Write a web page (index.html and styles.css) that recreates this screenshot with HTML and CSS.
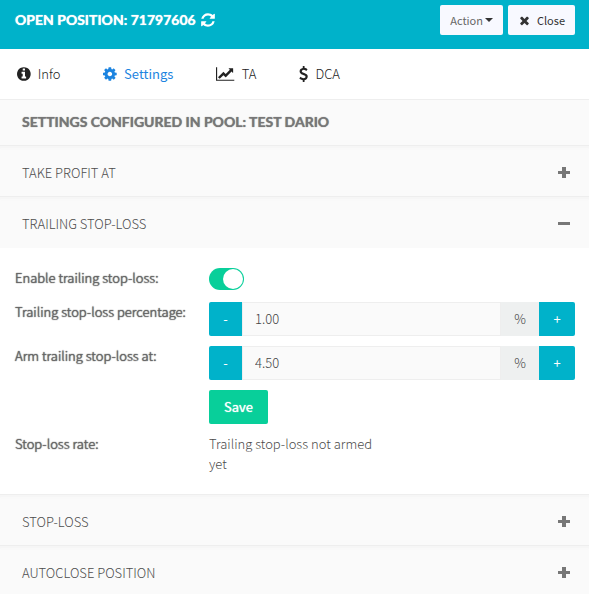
FILE: index.html
```html
<!DOCTYPE html>
<html lang="en">
<head>
    <meta charset="UTF-8">
    <meta name="viewport" content="width=device-width, initial-scale=1.0">
    <title>Open Position: 71797606</title>
    <link rel="stylesheet" href="styles.css">
</head>
<body>
    <header class="topbar">
        <h1>OPEN POSITION: 71797606</h1>
        <button class="refresh" type="button" aria-label="Refresh">
            <svg class="icon" viewBox="0 0 1792 1792"><path d="M1639 1056q0 5-1 7-64 268-268 434.500t-478 166.500q-146 0-282.500-55t-243.500-157l-129 129q-19 19-45 19t-45-19-19-45v-448q0-26 19-45t45-19h448q26 0 45 19t19 45-19 45l-137 137q71 66 161 102t187 36q134 0 250-65t186-179q11-17 53-117 8-23 30-23h192q13 0 22.500 9.500t9.500 22.500zm25-800v448q0 26-19 45t-45 19h-448q-26 0-45-19t-19-45 19-45l138-138q-148-137-349-137-134 0-250 65t-186 179q-11 17-53 117-8 23-30 23h-199q-13 0-22.500-9.500t-9.500-22.500v-7q65-268 270-434.500t480-166.500q146 0 284 55.500t245 156.500l130-129q19-19 45-19t45 19 19 45z"/></svg>
        </button>
        <div class="topbar-buttons">
            <button class="btn-light btn-action" type="button">Action<span class="caret"></span></button>
            <button class="btn-light btn-close" type="button">
                <svg class="icon-small" viewBox="0 0 1792 1792"><path d="M1490 1322q0 40-28 68l-136 136q-28 28-68 28t-68-28l-294-294-294 294q-28 28-68 28t-68-28l-136-136q-28-28-28-68t28-68l294-294-294-294q-28-28-28-68t28-68l136-136q28-28 68-28t68 28l294 294 294-294q28-28 68-28t68 28l136 136q28 28 28 68t-28 68l-294 294 294 294q28 28 28 68z"/></svg>
                Close
            </button>
        </div>
    </header>
    <nav class="tabs">
        <a href="#info">
            <svg class="icon" viewBox="128 0 1536 1792"><path d="M1152 1376v-160q0-14-9-23t-23-9h-96v-512q0-14-9-23t-23-9h-320q-14 0-23 9t-9 23v160q0 14 9 23t23 9h96v320h-96q-14 0-23 9t-9 23v160q0 14 9 23t23 9h448q14 0 23-9t9-23zm-128-896v-160q0-14-9-23t-23-9h-192q-14 0-23 9t-9 23v160q0 14 9 23t23 9h192q14 0 23-9t9-23zm640 416q0 209-103 385.500t-279.500 279.500-385.500 103-385.500-103-279.500-279.500-103-385.500 103-385.500 279.500-279.500 385.500-103 385.500 103 279.500 279.500 103 385.500z"/></svg>
            Info
        </a>
        <a href="#settings" class="active">
            <svg class="icon" viewBox="128 0 1536 1792"><path d="M1152 896q0-106-75-181t-181-75-181 75-75 181 75 181 181 75 181-75 75-181zm512-109v222q0 12-8 23t-20 13l-185 28q-19 54-39 91 35 50 107 138 10 12 10 25t-9 23q-27 37-99 108t-94 71q-12 0-26-9l-138-108q-44 23-91 38-16 136-29 186-7 28-36 28h-222q-14 0-24.500-8.500t-11.500-21.500l-28-184q-49-16-90-37l-141 107q-10 9-25 9-14 0-25-11-126-114-165-168-7-10-7-23 0-12 8-23 15-21 51-66.500t54-70.500q-27-50-41-99l-183-27q-13-2-21-12.500t-8-23.500v-222q0-12 8-23t19-13l186-28q14-46 39-92-40-57-107-138-10-12-10-24 0-10 9-23 26-36 98.500-107.500t94.500-71.500q13 0 26 10l138 107q44-23 91-38 16-136 29-186 7-28 36-28h222q14 0 24.500 8.500t11.500 21.500l28 184q49 16 90 37l142-107q9-9 24-9 13 0 25 10 129 119 165 170 7 8 7 22 0 12-8 23-15 21-51 66.500t-54 70.500q26 50 41 98l183 28q13 2 21 12.500t8 23.500z"/></svg>
            Settings
        </a>
        <a href="#ta">
            <svg class="icon" viewBox="0 0 2048 1792"><path d="M2048 1536v128h-2048v-1536h128v1408h1920zm-128-1248v435q0 21-19.500 29.500t-35.500-7.500l-121-121-633 633q-10 10-23 10t-23-10l-233-233-416 416-192-192 585-585q10-10 23-10t23 10l233 233 464-464-121-121q-16-16-7.500-35.500t29.500-19.500h435q14 0 23 9t9 23z"/></svg>
            TA
        </a>
        <a href="#dca">
            <svg class="icon" viewBox="384 0 1024 1792"><path d="M1362 1185q0 153-99.500 263.500t-258.500 136.500v175q0 14-9 23t-23 9h-135q-13 0-22.500-9.500t-9.500-22.500v-175q-66-9-127.500-31t-101.500-44.500-74-48-46.500-37.500-17.500-18q-17-21-2-41l103-135q7-10 23-12 15-2 24 9l2 2q113 99 243 125 37 8 74 8 81 0 142.500-43t61.500-122q0-28-15-53t-33.500-42-58.500-37.500-66-32-80-32.500q-39-16-61.500-25t-61.500-26.500-62.500-31-56.500-35.500-53.500-42.500-43.500-49-35.500-58-21-66.500-8.500-78q0-138 98-242t255-134v-180q0-13 9.500-22.500t22.500-9.500h135q14 0 23 9t9 23v176q57 6 110.500 23t87 33.500 63.500 37.500 39 29 15 14q17 18 5 38l-81 146q-8 15-23 16-14 3-27-7-3-3-14.500-12t-39-26.500-58.500-32-74.500-26-85.500-11.500q-95 0-155 43t-60 111q0 26 8.500 48t29.500 41.500 39.500 33 56 31 60.500 27 70 27.500q53 20 81 31.500t76 35 75.500 42.500 62 50 53 63.500 31.500 76.500 13 94z"/></svg>
            DCA
        </a>
    </nav>
    <main>
        <h2 class="pool-title">SETTINGS CONFIGURED IN POOL: TEST DARIO</h2>
        <button class="panel-heading" type="button" aria-expanded="false">
            TAKE PROFIT AT
            <svg class="sign" viewBox="0 0 12 12"><path d="M0 4h4V0h4v4h4v3H8v4H4V7H0z"/></svg>
        </button>
        <button class="panel-heading open" type="button" aria-expanded="true">
            TRAILING STOP-LOSS
            <svg class="sign" viewBox="0 0 12 12"><path d="M0 4h12v3H0z"/></svg>
        </button>
        <form class="panel-body">
            <label for="enable">Enable trailing stop-loss:</label>
            <div class="switch-row"><input class="switch" type="checkbox" id="enable" checked></div>

            <label for="percentage">Trailing stop-loss percentage:</label>
            <div class="input-group">
                <button class="step minus" type="button">-</button>
                <input type="text" id="percentage" value="1.00">
                <span class="addon">%</span>
                <button class="step plus" type="button">+</button>
            </div>

            <label for="arm">Arm trailing stop-loss at:</label>
            <div class="input-group">
                <button class="step minus" type="button">-</button>
                <input type="text" id="arm" value="4.50">
                <span class="addon">%</span>
                <button class="step plus" type="button">+</button>
            </div>

            <button class="btn-save" type="button">Save</button>

            <span class="label">Stop-loss rate:</span>
            <p class="rate">Trailing stop-loss not armed yet</p>
        </form>
        <button class="panel-heading" type="button" aria-expanded="false">
            STOP-LOSS
            <svg class="sign" viewBox="0 0 12 12"><path d="M0 4h4V0h4v4h4v3H8v4H4V7H0z"/></svg>
        </button>
        <button class="panel-heading" type="button" aria-expanded="false">
            AUTOCLOSE POSITION
            <svg class="sign" viewBox="0 0 12 12"><path d="M0 4h4V0h4v4h4v3H8v4H4V7H0z"/></svg>
        </button>
    </main>
</body>
</html>
```
FILE: styles.css
```css
* {
    box-sizing: border-box;
}
body {
    margin: 0;
    background: #fff;
    color: #4c4c4c;
    font-family: "Noto Sans CJK SC", sans-serif;
    font-size: 13px;
    font-weight: 300;
    line-height: 20px;
}
button, input {
    font: inherit;
    border: 0;
    margin: 0;
}
button {
    cursor: pointer;
}
svg {
    fill: currentColor;
    flex: none;
}
h1, h2 {
    margin: 0;
    font-family: Lato, sans-serif;
    font-size: 14px;
    font-weight: 700;
    line-height: 20px;
    text-shadow: 0 0 1px currentColor;
}
.icon {
    height: 16px;
}
.icon-small {
    height: 13px;
}
.topbar {
    display: flex;
    align-items: flex-start;
    background: #00b2ca;
    color: #fff;
    height: 49px;
    padding: 5px 14px 0 15px;
}
.topbar h1 {
    padding-top: 5px;
}
.refresh {
    display: flex;
    background: none;
    color: #fff;
    padding: 7px 4px;
}
.topbar-buttons {
    display: flex;
    gap: 5px;
    margin-left: auto;
}
.btn-light {
    display: flex;
    align-items: center;
    height: 30px;
    padding: 0 10px;
    background: #f8f9ff;
    color: #333;
    font-size: 11px;
    font-weight: 400;
    border-radius: 2px;
}
.btn-action {
    color: #666;
}
.btn-close {
    gap: 6px;
}
.caret {
    margin-left: 2px;
    border-top: 4px solid #333;
    border-left: 4px solid transparent;
    border-right: 4px solid transparent;
}
.tabs {
    display: flex;
    gap: 43px;
    padding: 15px 17px;
    border-bottom: 1px solid #eee;
}
.tabs a {
    display: flex;
    align-items: center;
    gap: 7px;
    color: #222;
    text-decoration: none;
}
.tabs a.active {
    color: #1c84e0;
    font-weight: 400;
}
.pool-title {
    padding: 12px 22px 13px;
    background: #fafafa;
    border-bottom: 1px solid #eee;
    color: #777;
}
.panel-heading {
    display: flex;
    justify-content: space-between;
    align-items: center;
    width: 100%;
    padding: 17px 19px 13px 22px;
    background: #fafafa;
    border-bottom: 1px solid #eee;
    box-shadow: inset 0 4px 3px -2px #f5f5f5;
    color: inherit;
    text-align: left;
}
.panel-heading.open {
    border-bottom-color: #fafafa;
}
.sign {
    width: 12px;
    height: 12px;
    fill: #777;
}
.panel-body {
    display: grid;
    grid-template-columns: 1fr 2fr;
    gap: 10px 11px;
    padding: 20px 14px 20px 15px;
    border-bottom: 1px solid #eee;
}
.panel-body label, .label {
    color: #666;
    text-shadow: 0 0 1px currentColor, 0 0 1px currentColor;
}
.switch-row {
    height: 24px;
}
.switch {
    appearance: none;
    display: block;
    width: 35px;
    height: 22px;
    padding: 1px;
    border-radius: 11px;
    background: #08cf9a;
}
.switch::before {
    content: "";
    display: block;
    width: 20px;
    height: 20px;
    border-radius: 50%;
    background: #fff;
}
.switch:checked::before {
    margin-left: auto;
}
.input-group {
    display: flex;
    height: 34px;
}
.input-group input {
    flex: 1;
    min-width: 0;
    padding: 0 12px;
    background: #fafafa;
    border: 1px solid #eee;
    color: #444;
}
.step {
    padding: 0;
    background: #00b2ca;
    color: #fff;
    font-weight: 400;
}
.minus {
    width: 33px;
    border-radius: 2px 0 0 2px;
}
.plus {
    width: 36px;
    border-radius: 0 2px 2px 0;
}
.addon {
    width: 38px;
    background: #eef0f0;
    color: #444;
    line-height: 34px;
    text-align: center;
}
.btn-save {
    grid-column: 2;
    justify-self: start;
    height: 34px;
    padding: 0 15px;
    background: #08cf9a;
    border-radius: 2px;
    color: #fff;
    font-weight: 400;
    text-shadow: 0 0 1px currentColor;
}
.rate {
    margin: 0;
    max-width: 50%;
}
```
